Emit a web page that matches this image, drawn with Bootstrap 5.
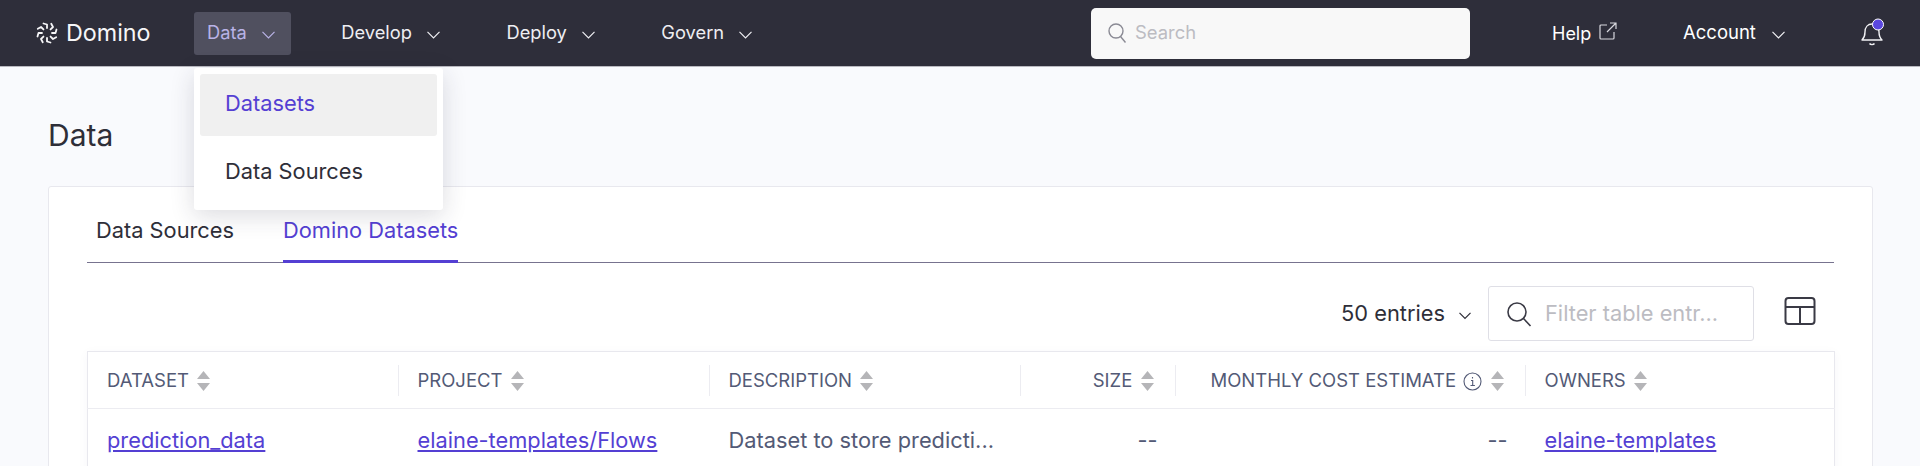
<!DOCTYPE html>
<html lang="en">
<head>
    <meta charset="UTF-8">
    <title>Domino Data</title>
    <link href="https://cdn.jsdelivr.net/npm/bootstrap@5.3.0/dist/css/bootstrap.min.css" rel="stylesheet">
    <style>
        body {
            font-family: Inter, "Liberation Sans", sans-serif;
            background: #f9fafd;
            color: #2e2e38;
            overflow: hidden;
            height: 466px;
        }
        .top-bar {
            height: 67px;
            background: #2e2e3a;
            border-bottom: 1px solid #b9b9c0;
            padding: 0 35px 0 36px;
        }
        .brand-name {
            color: #f6f6f8;
            font-size: 23.3px;
            margin-left: 8px;
            width: 128px;
        }
        .nav-entry {
            position: relative;
            margin-right: 37.5px;
        }
        .nav-btn {
            display: flex;
            align-items: center;
            height: 43px;
            padding: 0 16px 0 13px;
            color: #eeeef2;
            font-size: 18.3px;
            border-radius: 3px;
            text-decoration: none;
        }
        .nav-btn svg { margin-left: 15px; margin-top: 3px; }
        .nav-btn.is-open { background: #50505f; color: #b9b3e6; }
        .data-menu {
            top: 56px;
            left: 0;
            width: 249px;
            height: 142px;
            padding: 6px;
            border: 0;
            border-radius: 3px;
            box-shadow: 0 6px 24px rgba(40, 40, 60, .16);
            font-size: 21.8px;
        }
        .data-menu .dropdown-item {
            height: 62px;
            margin-bottom: 6px;
            padding: 0 25px;
            line-height: 58px;
            color: #2e2e38;
            border-radius: 3px;
        }
        .data-menu .dropdown-item.active { background: #f0f0f0; color: #543fd3; }
        .search-box {
            width: 379px;
            height: 51px;
            margin-left: auto;
            padding: 0 16px;
            background: #f8f8f8;
            border-radius: 5px;
            color: #bcbcc2;
            font-size: 18.4px;
        }
        .help-link { margin-left: 82px; color: #fff; font-size: 18px; width: 131px; }
        .account-link { color: #fff; font-size: 18.5px; width: 176px; }
        .page-title { font-size: 30px; font-weight: 400; margin: 0; padding: 47px 0 0 48px; height: 119px; line-height: 42px; color: #2e2e38; }
        .main-panel {
            margin: 0 47px 0 48px;
            padding: 0 38px;
            height: 400px;
            background: #fff;
            border: 1px solid #e8e8ee;
            border-radius: 3px;
        }
        .tab-row {
            height: 76px;
            border-bottom: 1px solid #77738f;
            padding-left: 9px;
            font-size: 21.8px;
            gap: 49px;
        }
        .tab-entry { height: 76px; line-height: 86px; color: #2e2e38; text-decoration: none; }
        .tab-entry.active { color: #543fd3; border-bottom: 3px solid #543fd3; }
        .tools-row { height: 88px; padding-top: 23px; font-size: 21.8px; }
        .entries-pick { height: 55px; }
        .entries-pick svg { margin-left: 14px; margin-top: 4px; }
        .filter-box {
            width: 266px;
            height: 55px;
            margin-left: 17px;
            margin-right: 30px;
            padding: 0 16px;
            gap: 12px;
            border: 1px solid #dfdfe6;
            border-radius: 3px;
            color: #bcbcc2;
            font-size: 21.8px;
            white-space: nowrap;
        }
        .layout-icon { margin-right: 18px; margin-top: 10px; }
        .data-table {
            table-layout: fixed;
            width: 1748px;
            margin: 0;
            border: 1px solid #e8e8ee;
            border-bottom: 0;
            box-shadow: 0 2px 10px rgba(60, 60, 90, .04);
        }
        .col-first { width: 310px; }
        .col-wide { width: 311px; }
        .col-size { width: 155px; }
        .col-cost { width: 350px; }
        .data-table th {
            height: 57px;
            padding: 2px 19px 0;
            font-size: 18.5px;
            font-weight: 400;
            color: #535a76;
            vertical-align: middle;
            border-bottom: 1px solid #ececf1;
            position: relative;
        }
        .data-table th.text-end { padding-right: 21px; white-space: nowrap; }
        .data-table th + th::before {
            content: "";
            position: absolute;
            left: 0;
            top: 13px;
            height: 31px;
            border-left: 1px solid #ececf1;
        }
        .data-table td {
            height: 62px;
            padding: 1px 19px 0;
            font-size: 21.8px;
            color: #535a76;
            vertical-align: middle;
            border: 0;
            white-space: nowrap;
        }
        .data-table th + th, .data-table td + td { padding-left: 20px; }
        .data-table td.text-end { padding-right: 17px; }
        .data-table a { color: #543fd3; }
        .sort-mark { margin-left: 3px; vertical-align: -4px; }
        .info-mark { margin-left: 2px; vertical-align: -4px; }
    </style>
</head>
<body>
<nav class="top-bar d-flex align-items-center">
    <svg width="22" height="22" viewBox="0 0 22 22" fill="none" stroke="#f6f6f8" stroke-width="1.8" stroke-linecap="round" stroke-linejoin="round">
        <path d="M7.500 1.500L11 2.500V6"/>
        <path d="M7.500 1.500L11 2.500V6" transform="rotate(45 11 11)"/>
        <path d="M7.500 1.500L11 2.500V6" transform="rotate(90 11 11)"/>
        <path d="M7.500 1.500L11 2.500V6" transform="rotate(135 11 11)"/>
        <path d="M7.500 1.500L11 2.500V6" transform="rotate(180 11 11)"/>
        <path d="M7.500 1.500L11 2.500V6" transform="rotate(225 11 11)"/>
        <path d="M7.500 1.500L11 2.500V6" transform="rotate(270 11 11)"/>
        <path d="M7.500 1.500L11 2.500V6" transform="rotate(315 11 11)"/>
    </svg>
    <span class="brand-name">Domino</span>

    <div class="nav-entry dropdown">
        <a href="#" class="nav-btn is-open">Data
            <svg width="13" height="8" viewBox="0 0 13 8" fill="none" stroke="currentColor" stroke-width="1.2"><path d="M.5.8l6 6 6-6"/></svg>
        </a>
        <ul class="dropdown-menu data-menu show">
            <li><a class="dropdown-item active" href="#">Datasets</a></li>
            <li><a class="dropdown-item" href="#">Data Sources</a></li>
        </ul>
    </div>
    <div class="nav-entry">
        <a href="#" class="nav-btn">Develop
            <svg width="13" height="8" viewBox="0 0 13 8" fill="none" stroke="currentColor" stroke-width="1.2"><path d="M.5.8l6 6 6-6"/></svg>
        </a>
    </div>
    <div class="nav-entry">
        <a href="#" class="nav-btn">Deploy
            <svg width="13" height="8" viewBox="0 0 13 8" fill="none" stroke="currentColor" stroke-width="1.2"><path d="M.5.8l6 6 6-6"/></svg>
        </a>
    </div>
    <div class="nav-entry">
        <a href="#" class="nav-btn">Govern
            <svg width="13" height="8" viewBox="0 0 13 8" fill="none" stroke="currentColor" stroke-width="1.2"><path d="M.5.8l6 6 6-6"/></svg>
        </a>
    </div>

    <div class="search-box d-flex align-items-center gap-2">
        <svg width="20" height="22" viewBox="0 0 20 22" fill="none" stroke="#8a8a94" stroke-width="1.4"><circle cx="9" cy="9" r="7"/><path d="M13.500 14.500l5 6"/></svg>
        <span>Search</span>
    </div>

    <div class="help-link d-flex align-items-center">
        <span>Help</span>
        <svg class="ms-2 mb-1" width="18" height="18" viewBox="0 0 18 18" fill="none" stroke="#d8d8de" stroke-width="1.2"><path d="M8 3H2a1 1 0 0 0-1 1v12a1 1 0 0 0 1 1h12a1 1 0 0 0 1-1v-6M8 10L16.500 1.500M11 1h6v6"/></svg>
    </div>
    <div class="account-link d-flex align-items-center">
        <span>Account</span>
        <svg class="ms-3 mt-1" width="13" height="8" viewBox="0 0 13 8" fill="none" stroke="#f2f2f5" stroke-width="1.2"><path d="M.5.8l6 6 6-6"/></svg>
    </div>
    <svg width="26" height="30" viewBox="0 0 26 30" fill="none">
        <path d="M3 22c2-2 3-4 3-8 0-5 3-8 7-8s7 3 7 8c0 4 1 6 3 8zM10.500 25.500c1 1.500 4 1.500 5 0" stroke="#f2f2f5" stroke-width="1.4" stroke-linejoin="round"/>
        <circle cx="19" cy="6.500" r="5.500" fill="#5a47e0" stroke="#fff" stroke-width="1"/>
    </svg>
</nav>

<h1 class="page-title">Data</h1>

<div class="main-panel">
    <div class="tab-row d-flex">
        <a href="#" class="tab-entry">Data Sources</a>
        <a href="#" class="tab-entry active">Domino Datasets</a>
    </div>
    <div class="tools-row d-flex justify-content-end align-items-start">
        <div class="d-flex align-items-center entries-pick">
            <span>50 entries</span>
            <svg width="12" height="8" viewBox="0 0 12 8" fill="none" stroke="#2e2e38" stroke-width="1.2"><path d="M.5.8L6 6.500 11.500.8"/></svg>
        </div>
        <div class="filter-box d-flex align-items-center">
            <svg width="28" height="28" viewBox="0 0 28 28" fill="none" stroke="#3a3a45" stroke-width="1.6" class="flex-shrink-0"><circle cx="12" cy="12" r="9"/><path d="M18.500 18.500l7 7.500"/></svg>
            <span>Filter table entr...</span>
        </div>
        <svg class="layout-icon" width="32" height="30" viewBox="0 0 32 30" fill="none" stroke="#3a3a45" stroke-width="2"><rect x="1.500" y="2" width="29" height="26" rx="3"/><path d="M1.500 11h29M16 11v17"/></svg>
    </div>
    <table class="table data-table">
        <colgroup>
            <col class="col-first"><col class="col-wide"><col class="col-wide"><col class="col-size"><col class="col-cost"><col>
        </colgroup>
        <thead>
        <tr>
            <th>DATASET <svg class="sort-mark" width="13" height="20" viewBox="0 0 13 20" fill="#b5b5b8"><path d="M6.500 0l6.500 8H0zM0 12h13l-6.500 8z"/></svg></th>
            <th>PROJECT <svg class="sort-mark" width="13" height="20" viewBox="0 0 13 20" fill="#b5b5b8"><path d="M6.500 0l6.500 8H0zM0 12h13l-6.500 8z"/></svg></th>
            <th>DESCRIPTION <svg class="sort-mark" width="13" height="20" viewBox="0 0 13 20" fill="#b5b5b8"><path d="M6.500 0l6.500 8H0zM0 12h13l-6.500 8z"/></svg></th>
            <th class="text-end">SIZE <svg class="sort-mark" width="13" height="20" viewBox="0 0 13 20" fill="#b5b5b8"><path d="M6.500 0l6.500 8H0zM0 12h13l-6.500 8z"/></svg></th>
            <th class="text-end">MONTHLY COST ESTIMATE
                <svg class="info-mark" width="19" height="19" viewBox="0 0 19 19" fill="none" stroke="#535a76" stroke-width="1.1"><circle cx="9.500" cy="9.500" r="8.500"/><path d="M8 8.500h1.700v5M7.500 13.500h4.400M9.500 5v1.500"/></svg>
                <svg class="sort-mark" width="13" height="20" viewBox="0 0 13 20" fill="#b5b5b8"><path d="M6.500 0l6.500 8H0zM0 12h13l-6.500 8z"/></svg></th>
            <th>OWNERS <svg class="sort-mark" width="13" height="20" viewBox="0 0 13 20" fill="#b5b5b8"><path d="M6.500 0l6.500 8H0zM0 12h13l-6.500 8z"/></svg></th>
        </tr>
        </thead>
        <tbody>
        <tr>
            <td><a href="#">prediction_data</a></td>
            <td><a href="#">elaine-templates/Flows</a></td>
            <td>Dataset to store predicti...</td>
            <td class="text-end">--</td>
            <td class="text-end">--</td>
            <td><a href="#">elaine-templates</a></td>
        </tr>
        </tbody>
    </table>
</div>

<script src="https://cdn.jsdelivr.net/npm/bootstrap@5.3.0/dist/js/bootstrap.bundle.min.js"></script>
</body>
</html>
